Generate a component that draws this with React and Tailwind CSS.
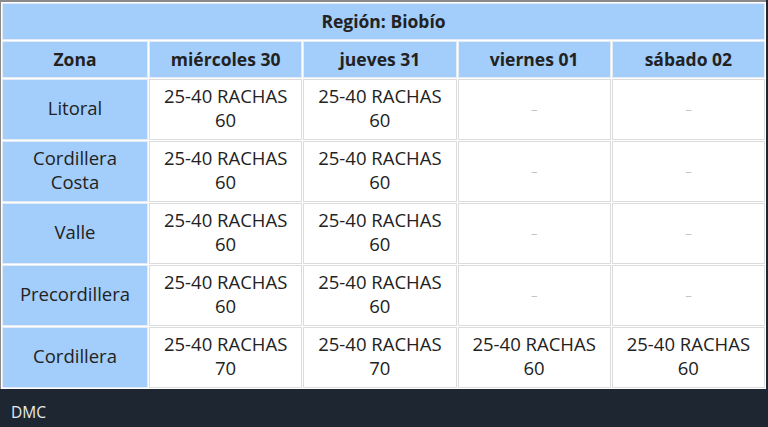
import React from 'react';

const days = ['miércoles 30', 'jueves 31', 'viernes 01', 'sábado 02'];

const rows = [
    { zona: ['Litoral'], vals: ['60', '60', null, null] },
    { zona: ['Cordillera', 'Costa'], vals: ['60', '60', null, null] },
    { zona: ['Valle'], vals: ['60', '60', null, null] },
    { zona: ['Precordillera'], vals: ['60', '60', null, null] },
    { zona: ['Cordillera'], vals: ['70', '70', '60', '60'] },
];

const App = () => {
    return (
        <div
            className="w-[768px] h-[427px] bg-[#1e2731] flex flex-col overflow-hidden"
            style={{ fontFamily: '"Open Sans", "Noto Sans", sans-serif' }}
        >
            <div className="w-[766px] bg-white border-t-2 border-l border-[#8a8a8a]">
                <table
                    className="w-full table-fixed border-separate text-[#222] text-[18.5px]"
                    style={{ borderSpacing: '1px' }}
                >
                    <colgroup>
                        <col className="w-[146px]" />
                        <col />
                        <col />
                        <col />
                        <col />
                    </colgroup>
                    <thead>
                        <tr>
                            <th
                                colSpan={5}
                                className="h-[37px] bg-[#a3cdfa] border border-[#e4ebf3] font-bold text-[17.5px]"
                            >
                                Región: Biobío
                            </th>
                        </tr>
                        <tr>
                            <th className="h-[37px] bg-[#a3cdfa] border border-[#e4ebf3] font-bold text-[17.5px]">Zona</th>
                            {days.map((d) => (
                                <th key={d} className="h-[37px] bg-[#a3cdfa] border border-[#e4ebf3] font-bold text-[17.5px]">
                                    {d}
                                </th>
                            ))}
                        </tr>
                    </thead>
                    <tbody>
                        {rows.map((r, i) => (
                            <tr key={i}>
                                <td className="h-[61px] bg-[#a3cdfa] border border-[#e4ebf3] text-center leading-6 pb-[3px]">
                                    {r.zona.map((z) => (
                                        <div key={z}>{z}</div>
                                    ))}
                                </td>
                                {r.vals.map((v, j) => (
                                    <td key={j} className="h-[61px] border border-[#dcdcdc] text-center leading-6 pb-[3px]">
                                        {v ? (
                                            <>
                                                <div>25-40 RACHAS</div>
                                                <div>{v}</div>
                                            </>
                                        ) : (
                                            <span className="text-[#c4c4c4] text-[13px]">–</span>
                                        )}
                                    </td>
                                ))}
                            </tr>
                        ))}
                    </tbody>
                </table>
            </div>
            <div className="flex-1 flex items-center pl-[11px] pt-[9px] text-[#e8eaed] text-[15.5px]">DMC</div>
        </div>
    );
};

export default App;
